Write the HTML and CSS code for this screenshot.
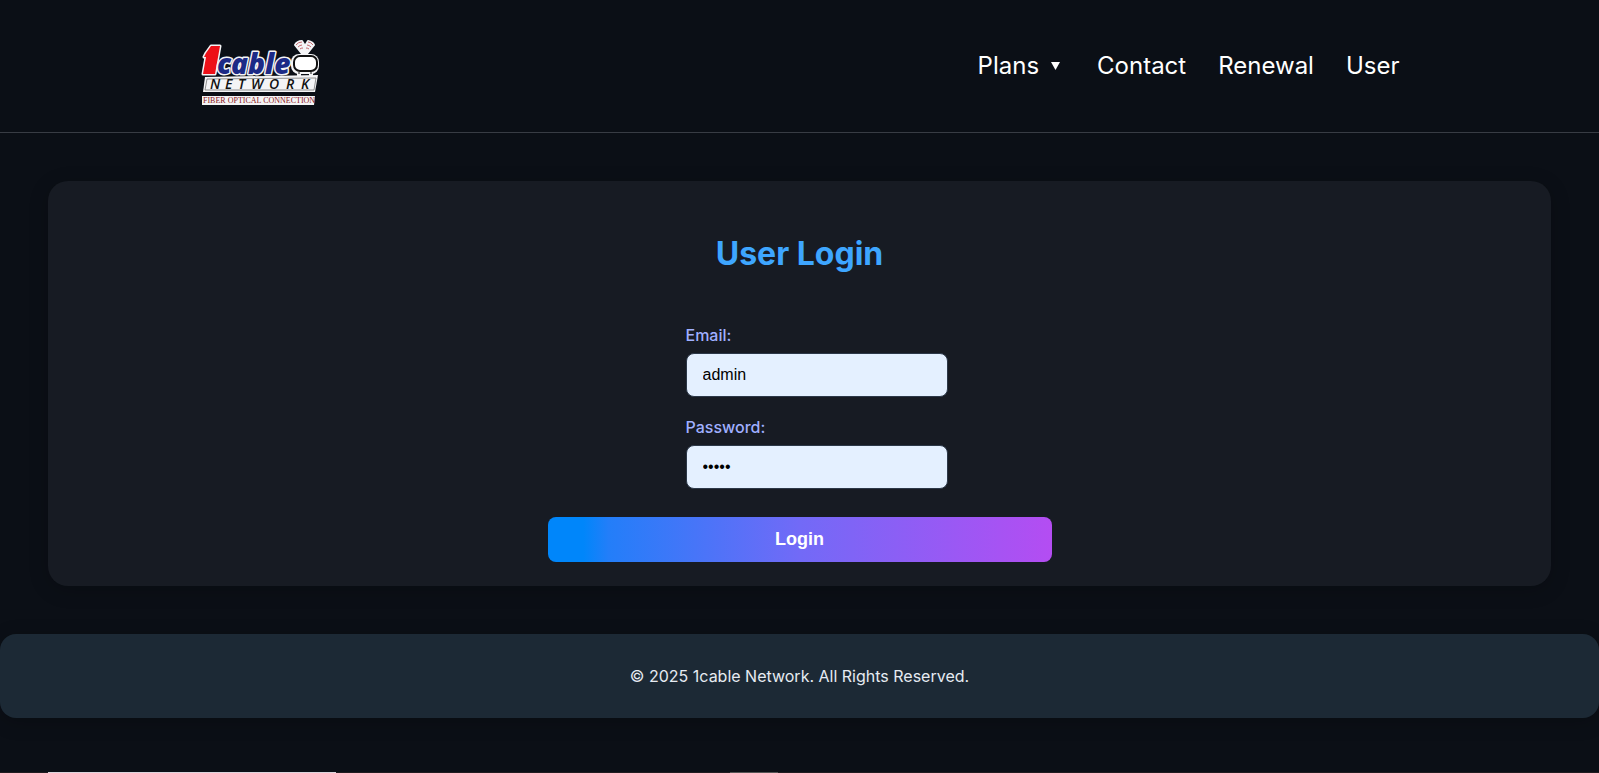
FILE: index.html
```html
<!DOCTYPE html>
<html lang="en">
<head>
<meta charset="utf-8">
<meta name="viewport" content="width=device-width, initial-scale=1">
<title>User Login - 1cable Network</title>
<link rel="stylesheet" href="styles.css">
</head>
<body>
<header class="site-header">
  <div class="header-inner">
    <a class="logo" href="#" aria-label="1cable Network home">
      <svg width="120" height="80" viewBox="10 -4 120 80" aria-hidden="true">
        <path d="M113 25L105 15Q107 11 112 11L115 16L118 11Q123 12 124 15L116 25Z" fill="#f4f4f6" stroke="#f4f4f6" stroke-width="2" stroke-linejoin="round"/>
        <path d="M106 15q2-3 6-3M108 17q2-2 4-2M110 19q1-1 3-1M123 15q-2-3-5-3M121 17q-2-2-4-2M119 19q-1-1-3-1" stroke="#c4686e" fill="none"/>
        <path d="M15 47L128 45L125 62H13Z" fill="#f4f4f6"/>
        <path d="M17 49L126 48L124 60H15Z" fill="none" stroke="#777" stroke-width="0.800"/>
        <path d="M16 23L21 16H30L25 44H13L16 27H14Z" fill="#ed1018" stroke="#f4f4f6" stroke-width="3" stroke-linejoin="round" paint-order="stroke"/>
        <text class="logo-cable" x="27" y="44">cable</text>
        <rect x="101" y="24" width="28" height="20" rx="8" fill="#f4f4f6"/>
        <rect x="104" y="26" width="23" height="15" rx="6" fill="#fff" stroke="#111" stroke-width="2"/>
        <path d="M109 42v4M121 42v4" stroke="#f4f4f6" stroke-width="4"/>
        <path d="M109 42v2M121 42v2" stroke="#111" stroke-width="1"/>
        <text class="logo-network" x="20 35 48 61 79 96 111" y="59">NETWORK</text>
        <path d="M12 66H125L124 75H12Z" fill="#f4f4f6"/>
        <text class="logo-tag" x="13" y="73">FIBER OPTICAL CONNECTION</text>
      </svg>
    </a>
    <nav class="main-nav" aria-label="Main">
      <a class="has-menu" href="#">Plans
        <svg width="10" height="9" viewBox="0 0 10 9" aria-hidden="true"><path d="M0 0H9L4.500 8Z" fill="currentColor"/></svg>
      </a>
      <a href="#">Contact</a>
      <a href="#">Renewal</a>
      <a href="#">User</a>
    </nav>
  </div>
</header>
<main class="login-card">
  <h1>User Login</h1>
  <form class="login-form">
    <div class="field">
      <label for="email">Email:</label>
      <input id="email" type="text" value="admin">
    </div>
    <div class="field">
      <label for="password">Password:</label>
      <input id="password" type="password" value="admin">
    </div>
    <button type="submit">Login</button>
  </form>
</main>
<footer class="site-footer">© 2025 1cable Network. All Rights Reserved.</footer>
<div class="bottom-strip"><span class="strip-search"></span><span class="strip-item"></span></div>
</body>
</html>
```

FILE: styles.css
```css
* { box-sizing: border-box; }

body {
  margin: 0;
  min-height: 100vh;
  display: flex;
  flex-direction: column;
  background: #0b0f16;
  color: #e6ebf2;
  font: 16px/24px Inter, sans-serif;
}

.site-header {
  padding: 26px 0;
  border-bottom: 1px solid #383c44;
}

.header-inner {
  max-width: 1200px;
  margin: 0 auto;
  display: flex;
  align-items: center;
  justify-content: space-between;
}

.logo, .logo svg { display: block; }

.logo-cable {
  font: italic 800 28px "Open Sans", sans-serif;
  fill: #1c2a86;
  stroke: #f4f4f6;
  stroke-width: 3px;
  stroke-linejoin: round;
  paint-order: stroke;
}

.logo-network { font: italic 600 14px "Open Sans", sans-serif; fill: #111; }
.logo-tag { font: 8px "Liberation Serif", serif; fill: #8b1620; }

.main-nav { display: flex; gap: 32px; }

.main-nav a {
  color: #fff;
  font-size: 24px;
  line-height: 32px;
  text-decoration: none;
}

.main-nav .has-menu {
  display: flex;
  align-items: center;
  gap: 12px;
  padding-right: 4px;
}

.login-card {
  margin: 48px;
  padding: 54px 24px 24px;
  border-radius: 20px;
  background: #171b23;
  box-shadow: 0 4px 20px rgba(0, 0, 0, 0.2);
}

.login-card h1 {
  margin: 0 0 50px;
  color: #3ea6ff;
  font-size: 32px;
  line-height: 38px;
  font-weight: 700;
  text-align: center;
}

.login-form {
  max-width: 504px;
  margin: 0 auto;
}

.field {
  width: 228px;
  margin: 0 auto 18px;
}

.field label {
  display: block;
  margin-bottom: 6px;
  color: #a0b0ff;
  font-weight: 500;
}

.field input {
  box-sizing: content-box;
  display: block;
  width: 100%;
  height: 18px;
  padding: 12px 16px;
  border: 1px solid #2c3848;
  border-radius: 8px;
  background: #e4f0ff;
  color: #000;
  font: 16px/18px "Liberation Sans", Arial, sans-serif;
}

.login-form button {
  display: block;
  width: 100%;
  height: 45px;
  margin-top: 28px;
  padding: 0 0 2px;
  border: 0;
  border-radius: 8px;
  background: linear-gradient(90deg, #0086fa 0%, #0086fa 7%, #237ef9 12%, #726af7 50%, #b44df2 100%);
  color: #fff;
  font: bold 18px/24px "Liberation Sans", Arial, sans-serif;
}

.site-footer {
  padding: 30px 24px;
  border-radius: 16px;
  background: #1c2935;
  box-shadow: 0 4px 20px rgba(0, 0, 0, 0.2);
  text-align: center;
}

.bottom-strip {
  display: flex;
  height: 1px;
  margin-top: auto;
  padding-left: 48px;
  background: #201c20;
}

.strip-search { width: 288px; background: #dcd5dc; }
.strip-item { width: 48px; margin-left: 394px; background: #555; }
```
